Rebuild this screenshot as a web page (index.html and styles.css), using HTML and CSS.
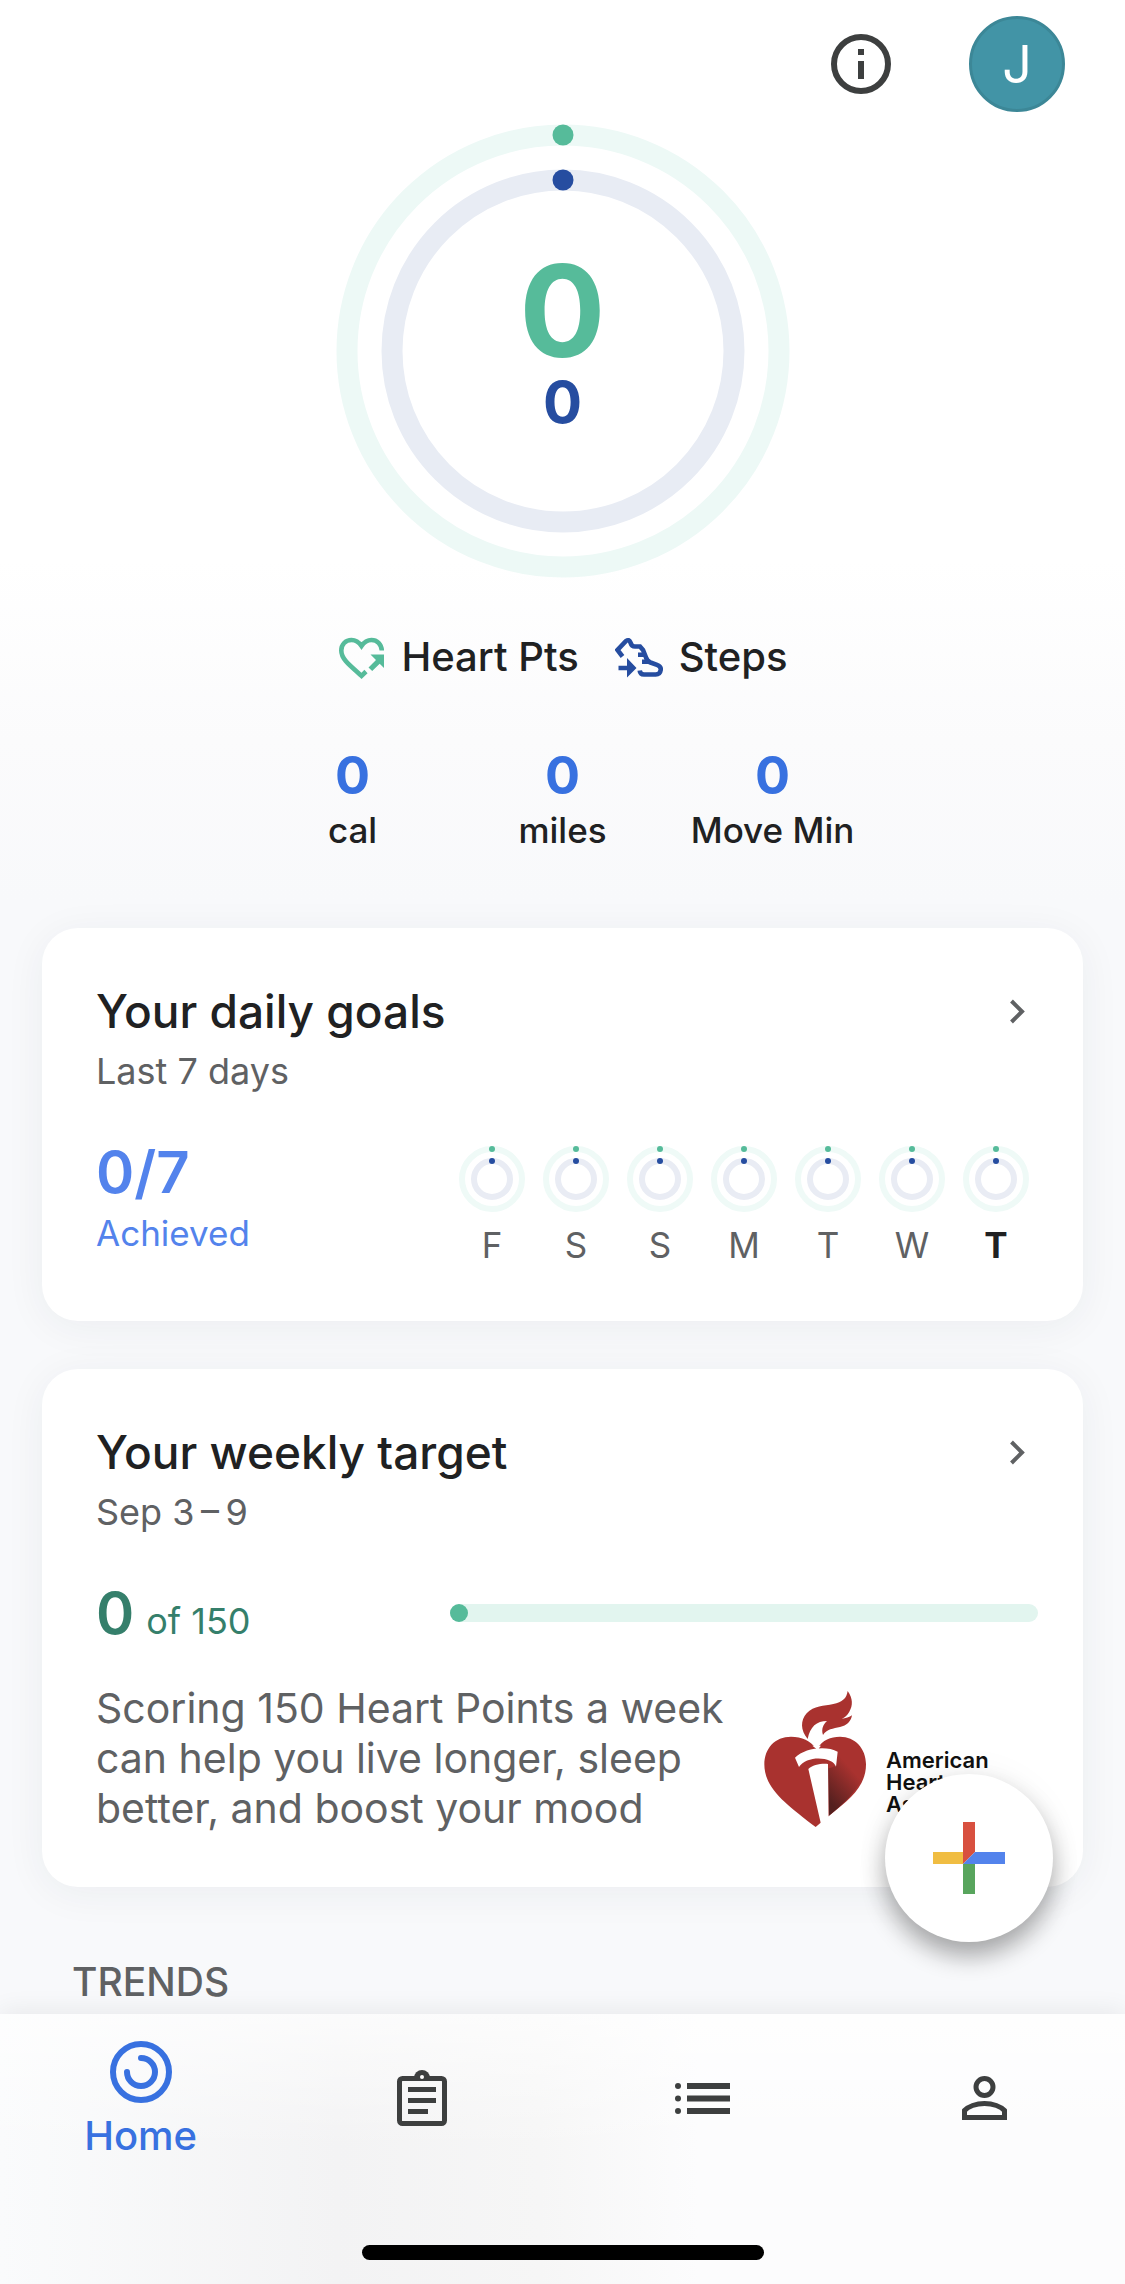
FILE: index.html
```html
<!DOCTYPE html>
<html lang="en">
<head>
<meta charset="utf-8">
<meta name="viewport" content="width=device-width, initial-scale=1">
<title>Fitness – Home</title>
<link rel="stylesheet" href="styles.css">
</head>
<body>
<svg class="defs" aria-hidden="true">
  <symbol id="mini-ring" viewBox="0 0 66 66">
    <circle cx="33" cy="33" r="30" fill="none" stroke="#effaf7" stroke-width="6"/>
    <circle cx="33" cy="33" r="18" fill="none" stroke="#e9ecf4" stroke-width="6"/>
    <circle cx="33" cy="3" r="3" fill="#56bb9a"/>
    <circle cx="33" cy="15" r="3" fill="#264da0"/>
  </symbol>
  <symbol id="chevron" viewBox="0 0 40 40">
    <path d="M13.500 10l10.500 10.500L13.500 31" fill="none" stroke="#5f6163" stroke-width="4"/>
  </symbol>
</svg>
<main class="page">
  <header class="topbar">
    <button class="plain" aria-label="Info">
      <svg width="60" height="60" viewBox="0 0 60 60"><circle cx="30" cy="30" r="27" fill="none" stroke="#3d3f3f" stroke-width="6"/><path d="M27 15h6v6h-6zM27 27h6v18h-6z" fill="#3d3f3f"/></svg>
    </button>
    <button class="avatar" aria-label="Account">J</button>
  </header>

  <section class="rings" aria-label="Today">
    <svg class="rings-art" viewBox="0 0 454 454">
      <circle cx="227" cy="227" r="216" fill="none" stroke="#edf9f6" stroke-width="21"/>
      <circle cx="227" cy="227" r="171" fill="none" stroke="#e8ecf4" stroke-width="21"/>
      <circle cx="227" cy="11" r="10.500" fill="#56bb9a"/>
      <circle cx="227" cy="56" r="10.500" fill="#264da0"/>
    </svg>
    <div class="rings-values">
      <span class="heart-value">0</span>
      <span class="steps-value">0</span>
    </div>
  </section>

  <div class="legend">
    <span class="legend-item">
      <svg width="48" height="48" viewBox="0 0 48 48">
        <path d="M44.800 17.500C44.500 11 40 7 34.500 7c-4 0-7.500 2.300-10 6C22 9.300 18.500 7 14.500 7 8.500 7 4.300 11.500 4.300 17.500c0 8.500 8 14.500 20.200 25.300l4.500-4.300" fill="none" stroke="#56bb9a" stroke-width="4.600"/>
        <path d="M33.500 21.500H47V35l-4.300-4.300-7.500 7.300-3.700-3.500 7.500-7.500z" fill="#56bb9a"/>
      </svg>
      Heart Pts
    </span>
    <span class="legend-item">
      <svg width="48" height="48" viewBox="0 0 48 48">
        <path d="M7.500 23.500L2.500 17l8.500-9c2-1.500 3.500-.8 4.300 1.200.8 2.500 2 4.300 4.700 4.300h5l3 3.500 3 7.500c.8 2.500 2 4 4.500 5l6.500 2.300c3 1 4 3 3.700 5.200-.4 2.800-2.200 4.500-5 4.500H29c-2.500 0-4-1-4.300-4" fill="none" stroke="#264da0" stroke-width="4.600"/>
        <path d="M23 19.500h8V24h-8zM27 26.500h8V31h-8zM3.500 32.700H12V25l9.500 10L12 44.500v-7.200H3.500z" fill="#264da0"/>
      </svg>
      Steps
    </span>
  </div>

  <dl class="stats">
    <div class="stat"><dd>0</dd><dt>cal</dt></div>
    <div class="stat"><dd>0</dd><dt>miles</dt></div>
    <div class="stat"><dd>0</dd><dt>Move Min</dt></div>
  </dl>

  <section class="card">
    <a class="card-head" href="#goals"><h2>Your daily goals</h2><svg width="40" height="40"><use href="#chevron"/></svg></a>
    <p class="sub">Last 7 days</p>
    <div class="card-row">
      <div class="achieved"><strong class="figure">0/7</strong><span>Achieved</span></div>
      <ul class="days">
        <li><svg width="66" height="66"><use href="#mini-ring"/></svg>F</li>
        <li><svg width="66" height="66"><use href="#mini-ring"/></svg>S</li>
        <li><svg width="66" height="66"><use href="#mini-ring"/></svg>S</li>
        <li><svg width="66" height="66"><use href="#mini-ring"/></svg>M</li>
        <li><svg width="66" height="66"><use href="#mini-ring"/></svg>T</li>
        <li><svg width="66" height="66"><use href="#mini-ring"/></svg>W</li>
        <li class="today"><svg width="66" height="66"><use href="#mini-ring"/></svg>T</li>
      </ul>
    </div>
  </section>

  <section class="card">
    <a class="card-head" href="#target"><h2>Your weekly target</h2><svg width="40" height="40"><use href="#chevron"/></svg></a>
    <p class="sub">Sep 3&thinsp;–&thinsp;9</p>
    <div class="card-row target-row">
      <div class="target"><strong class="figure">0</strong> <span>of 150</span></div>
      <div class="bar" role="progressbar" aria-label="Heart Points" aria-valuemin="0" aria-valuemax="150" aria-valuenow="0"><span class="bar-fill"></span></div>
    </div>
    <div class="about">
      <p>Scoring 150 Heart Points a week can help you live longer, sleep better, and boost your mood</p>
      <div class="aha">
        <svg width="102" height="136" viewBox="27 18 306 408">
          <defs>
            <linearGradient id="shade" gradientUnits="userSpaceOnUse" x1="215" y1="340" x2="300" y2="265"><stop offset="0" stop-color="#55201f"/><stop offset="1" stop-color="#a9322f"/></linearGradient>
          </defs>
          <path d="M182 190C168 168 140 155 108 155 60 155 28 190 28 238c0 72 65 120 154 188l15-13 25-21c68-52 111-92 111-154 0-48-33-83-78-83-28 0-53 10-67 35z" fill="#a9322f"/>
          <path d="M246 205l76 72c-18 44-55 79-100 115l-3-142c16-2 24-8 25-18z" fill="url(#shade)"/>
          <path d="M120 218c30-30 95-36 128-18l-5 45c-8-30-88-36-111 1zM160 252c12-12 38-17 59-15l2 190h-20l-4-14zM172 182h26l-10 12z" fill="#fff"/>
          <path d="M158 162c-22-26-22-56-3-77 22-24 52-22 80-28 27-5 40-17 43-39 16 22 16 44 5 62-6 11-14 18-23 21 12-1 24-4 31-10-3 19-16 31-36 35-20 5-40 6-51 24-6-18 1-32 12-42-31 0-51 17-58 54z" fill="#a9322f"/>
        </svg>
        <span class="aha-name">American<br>Heart<br>Association</span>
      </div>
    </div>
  </section>

  <h3 class="section-title">TRENDS</h3>
</main>

<nav class="nav">
  <button class="fab" aria-label="Add">
    <svg width="72" height="72" viewBox="0 0 72 72"><path d="M0 30h30v12H0z" fill="#f0bd42"/><path d="M30 42h12v30H30z" fill="#58a55d"/><path d="M30 0h12v30L30 42z" fill="#d8503f"/><path d="M42 30h30v12H30z" fill="#5383ec"/></svg>
  </button>
  <div class="tabs">
    <a class="tab active" href="#home">
      <svg width="62" height="62" viewBox="0 0 62 62" fill="none" stroke="#3871e0" stroke-width="6" stroke-linecap="round"><circle cx="31" cy="31" r="28"/><path d="M31 17a14 14 0 1 1-14 14"/></svg>
      Home
    </a>
    <a class="tab" href="#journal" aria-label="Journal">
      <svg width="50" height="56" viewBox="0 0 50 56"><path d="M17 8a8 8 0 0 1 16 0z" fill="#3d3f3f"/><rect x="2.500" y="8.500" width="45" height="45" rx="3" fill="none" stroke="#3d3f3f" stroke-width="5"/><circle cx="25" cy="7" r="2" fill="#fff"/><path d="M11 17h28v5H11zM11 28h28v5H11zM11 39h20v5H11z" fill="#3d3f3f"/></svg>
    </a>
    <a class="tab" href="#browse" aria-label="Browse">
      <svg width="56" height="31" viewBox="0 0 56 31" fill="#3d3f3f"><circle cx="3" cy="3" r="3"/><circle cx="3" cy="15.500" r="3"/><circle cx="3" cy="28" r="3"/><path d="M12 0h43v6H12zM12 12.500h43v6H12zM12 25h43v6H12z"/></svg>
    </a>
    <a class="tab" href="#profile" aria-label="Profile">
      <svg width="45" height="44" viewBox="0 0 45 44" fill="none" stroke="#3d3f3f" stroke-width="5"><circle cx="22.500" cy="11" r="8.500"/><path d="M2.500 41.500v-7c3.500-4 11.500-7 20-7s16.500 3 20 7v7z"/></svg>
    </a>
  </div>
  <div class="home-indicator"></div>
</nav>
</body>
</html>
```
FILE: styles.css
```css
* { box-sizing: border-box; margin: 0; padding: 0; }

body {
  min-height: 100vh;
  display: flex;
  flex-direction: column;
  font-family: Inter, "Liberation Sans", sans-serif;
  color: #202122;
  background: linear-gradient(#fff 560px, #fbfbfc 740px, #f8f9fb 900px);
}

svg { display: block; flex: none; }
a { color: inherit; text-decoration: none; }
button { border: 0; background: none; font: inherit; cursor: pointer; }
.defs { position: absolute; width: 0; height: 0; }

.page { flex: 1; padding-bottom: 6px; }

.topbar {
  display: flex;
  justify-content: flex-end;
  align-items: center;
  gap: 78px;
  padding: 16px 60px 0;
}

.avatar {
  width: 96px;
  height: 96px;
  border-radius: 50%;
  border: 3px solid #3c8797;
  background: #4294a6;
  color: #fff;
  font-size: 52px;
}

/* Activity rings */
.rings {
  display: grid;
  justify-content: center;
  margin-top: 12px;
}
.rings-art, .rings-values { grid-area: 1 / 1; }
.rings-art { width: 454px; height: 454px; }
.rings-values {
  display: flex;
  flex-direction: column;
  align-items: center;
  padding-top: 124px;
  font-weight: 700;
}
.heart-value { font-size: 128px; line-height: 126px; color: #56bb9a; }
.steps-value { font-size: 58px; line-height: 56px; color: #264da0; }

.legend {
  display: flex;
  justify-content: center;
  gap: 36px;
  margin-top: 54px;
  font-size: 40px;
  line-height: 50px;
  font-weight: 500;
}
.legend-item { display: flex; align-items: center; gap: 16px; }

.stats {
  display: grid;
  grid-template-columns: repeat(3, 210px);
  justify-content: center;
  margin: 63px 0 75px;
  text-align: center;
}
.stat dd { font-size: 52px; line-height: 62px; font-weight: 700; color: #3871e0; }
.stat dt { font-size: 35px; line-height: 46px; font-weight: 500; }

/* Cards */
.card {
  margin: 0 42px 48px;
  padding: 55px 45px 54px 54px;
  border-radius: 36px;
  background: #fff;
  box-shadow: 0 6px 40px rgba(40, 50, 60, 0.06);
}
.card-head { display: flex; justify-content: space-between; align-items: center; }
.card-head h2 { font-size: 46px; line-height: 56px; font-weight: 500; }
.sub { margin-top: 10px; font-size: 36px; line-height: 44px; color: #5f6163; }
.card-row { display: flex; justify-content: space-between; margin-top: 49px; }
.figure { font-size: 58px; line-height: 60px; font-weight: 600; }

.achieved {
  display: flex;
  flex-direction: column;
  gap: 9px;
  font-size: 35px;
  line-height: 44px;
  color: #5383ec;
}

.days {
  display: grid;
  grid-template-columns: repeat(7, 84px);
  padding-top: 4px;
  list-style: none;
  font-size: 35px;
  line-height: 44px;
  color: #5f6163;
}
.days li { display: flex; flex-direction: column; align-items: center; gap: 11px; }
.days .today { font-weight: 700; color: #202122; }

.target-row { align-items: center; }
.target {
  display: flex;
  align-items: baseline;
  gap: 12px;
  font-size: 36px;
  color: #357f6b;
}
.bar { width: 588px; height: 18px; border-radius: 9px; background: #e2f5ef; }
.bar-fill { display: block; width: 18px; height: 18px; border-radius: 9px; background: #56bb9a; }

.about { display: flex; gap: 24px; margin-top: 40px; }
.about p { flex: 1; font-size: 41px; line-height: 50px; color: #5f6163; }
.aha { display: flex; gap: 20px; width: 274px; padding-top: 8px; }
.aha-name { padding-top: 58px; font-size: 22px; line-height: 22px; font-weight: 600; color: #111; }

.section-title {
  margin: 70px 72px 0;
  font-size: 39px;
  line-height: 50px;
  font-weight: 500;
  color: #5f6163;
}

/* Bottom navigation */
.nav {
  position: sticky;
  bottom: 0;
  background: linear-gradient(rgba(255, 255, 255, 0.7), rgba(255, 255, 255, 0) 50%), linear-gradient(90deg, #fafbfc, #f3f3f4 30%, #f6f6f6 48%, #fcfcfd 62%, #fcfcfd);
  box-shadow: 0 -3px 24px rgba(0, 0, 0, 0.07);
}
.tabs { display: grid; grid-template-columns: repeat(4, 1fr); height: 168px; }
.tab {
  display: flex;
  flex-direction: column;
  align-items: center;
  justify-content: center;
  gap: 10px;
  font-size: 40px;
  line-height: 46px;
  font-weight: 500;
}
.tab.active { padding-top: 4px; color: #3871e0; }
.home-indicator {
  width: 402px;
  height: 15px;
  margin: 63px auto 0;
  border-radius: 8px;
  background: #000;
}
.nav::after { content: ""; display: block; height: 24px; }

.fab {
  position: absolute;
  right: 72px;
  bottom: calc(100% + 72px);
  display: grid;
  place-items: center;
  width: 168px;
  height: 168px;
  border-radius: 50%;
  background: #fff;
  box-shadow: 0 14px 24px rgba(0, 0, 0, 0.32), 0 0 36px rgba(0, 0, 0, 0.05);
}
```
